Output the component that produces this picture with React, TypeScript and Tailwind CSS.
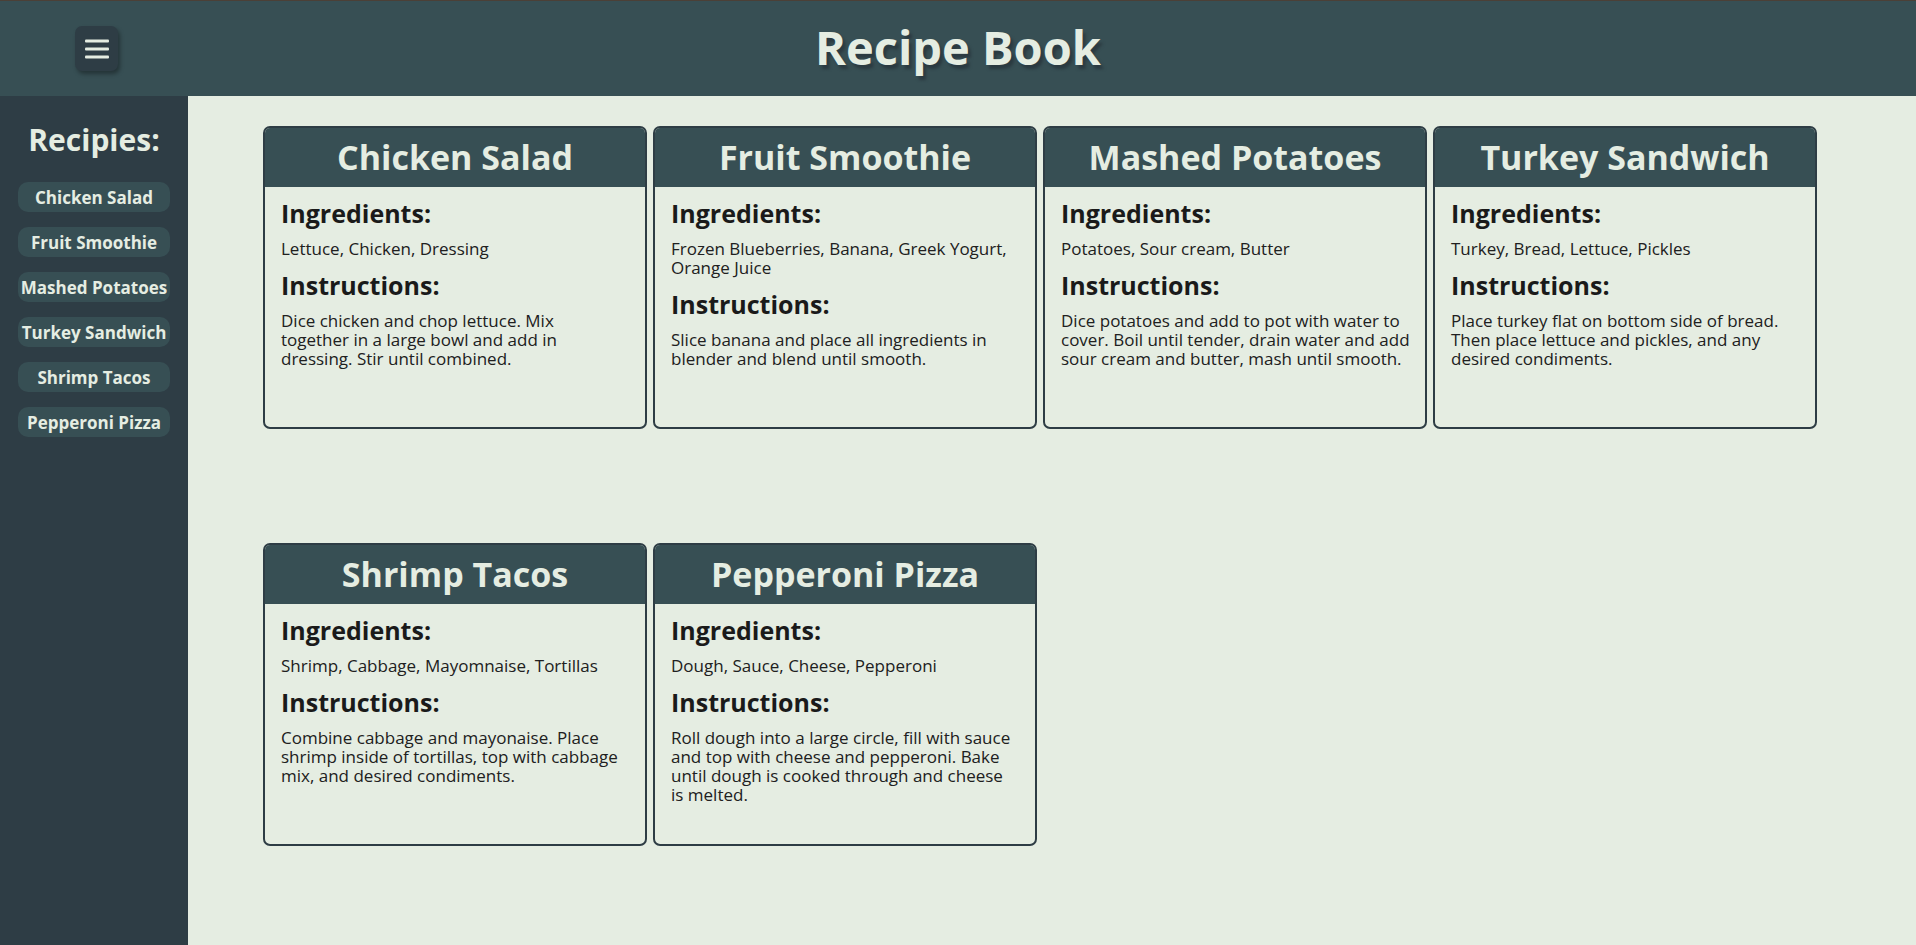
import React from "react"

// Recipe book page: top bar, sidebar of recipe links and a grid of recipe cards.
// Card text is kept as explicit lines so it breaks where the design breaks.

type Recipe = { name: string; ingredients: string[]; instructions: string[] }

const recipes: Recipe[] = [
    {
        name: "Chicken Salad",
        ingredients: ["Lettuce, Chicken, Dressing"],
        instructions: ["Dice chicken and chop lettuce. Mix", "together in a large bowl and add in", "dressing. Stir until combined."],
    },
    {
        name: "Fruit Smoothie",
        ingredients: ["Frozen Blueberries, Banana, Greek Yogurt,", "Orange Juice"],
        instructions: ["Slice banana and place all ingredients in", "blender and blend until smooth."],
    },
    {
        name: "Mashed Potatoes",
        ingredients: ["Potatoes, Sour cream, Butter"],
        instructions: [
            "Dice potatoes and add to pot with water to",
            "cover. Boil until tender, drain water and add",
            "sour cream and butter, mash until smooth.",
        ],
    },
    {
        name: "Turkey Sandwich",
        ingredients: ["Turkey, Bread, Lettuce, Pickles"],
        instructions: ["Place turkey flat on bottom side of bread.", "Then place lettuce and pickles, and any", "desired condiments."],
    },
    {
        name: "Shrimp Tacos",
        ingredients: ["Shrimp, Cabbage, Mayomnaise, Tortillas"],
        instructions: ["Combine cabbage and mayonaise. Place", "shrimp inside of tortillas, top with cabbage", "mix, and desired condiments."],
    },
    {
        name: "Pepperoni Pizza",
        ingredients: ["Dough, Sauce, Cheese, Pepperoni"],
        instructions: [
            "Roll dough into a large circle, fill with sauce",
            "and top with cheese and pepperoni. Bake",
            "until dough is cooked through and cheese",
            "is melted.",
        ],
    },
]

function MenuButton() {
    return (
        <button className="flex h-[45px] w-[43px] items-center justify-center rounded-[7px] bg-[#2e3d45] shadow-[2px_3px_4px_rgba(0,0,0,0.35)]">
            <svg width="24" height="20" viewBox="0 0 24 20" fill="#e5ede2">
                <rect x="0" y="0.5" width="24" height="3" rx="1" />
                <rect x="0" y="8.5" width="24" height="3" rx="1" />
                <rect x="0" y="16.5" width="24" height="3" rx="1" />
            </svg>
        </button>
    )
}

function Lines({ lines, className }: { lines: string[]; className?: string }) {
    return (
        <p className={className}>
            {lines.map((l, i) => (
                <span key={i} className="block whitespace-nowrap">
                    {l}
                </span>
            ))}
        </p>
    )
}

function RecipeCard({ recipe }: { recipe: Recipe }) {
    return (
        <div className="flex h-[303px] w-[384px] flex-col overflow-hidden rounded-[7px] border-2 border-[#2e3d45] bg-[#e5ede2]">
            <div className="flex h-[59px] shrink-0 items-center justify-center bg-[#374f54]">
                <h2 className="text-[34px] font-bold leading-[59px] text-[#e5ede2]">{recipe.name}</h2>
            </div>
            <div className="flex flex-col px-4 pt-[14px] text-[#1a1a1a]">
                <h3 className="text-[25px] font-bold leading-[24px]">Ingredients:</h3>
                <Lines lines={recipe.ingredients} className="mt-[14px] text-[17px] leading-[19px] text-[#202020]" />
                <h3 className="mt-[15px] text-[25px] font-bold leading-[24px]">Instructions:</h3>
                <Lines lines={recipe.instructions} className="mt-[14px] text-[17px] leading-[19px] text-[#202020]" />
            </div>
        </div>
    )
}

export default function App() {
    return (
        <div className="flex min-h-screen flex-col bg-[#e5ede2]" style={{ fontFamily: '"Open Sans", "Noto Sans", sans-serif' }}>
            <header className="grid h-[96px] shrink-0 grid-cols-[1fr_auto_1fr] items-center border-t border-[#4b4037] bg-[#374f54]">
                <div className="pl-[75px]">
                    <MenuButton />
                </div>
                <h1 className="pb-[3px] text-[47px] font-bold leading-none text-[#e5ede2] [text-shadow:3px_4px_3px_#2b3a41]">
                    Recipe Book
                </h1>
                <div />
            </header>

            <div className="flex flex-1">
                <aside className="flex w-[188px] shrink-0 flex-col items-center bg-[#2e3d45] pt-[24px]">
                    <h2 className="text-[30px] font-bold leading-[40px] text-[#e5ede2]">Recipies:</h2>
                    <nav className="mt-[22px] flex flex-col gap-[15px]">
                        {recipes.map((r) => (
                            <a
                                key={r.name}
                                href="#"
                                className="flex h-[30px] w-[152px] items-center justify-center rounded-[10px] bg-[#374f54] text-[17px] font-bold leading-none text-[#e5ede2]"
                            >
                                {r.name}
                            </a>
                        ))}
                    </nav>
                </aside>

                <main className="flex-1 pl-[75px] pt-[30px]">
                    <div className="grid grid-cols-[repeat(4,384px)] gap-x-[6px] gap-y-[114px]">
                        {recipes.map((r) => (
                            <RecipeCard key={r.name} recipe={r} />
                        ))}
                    </div>
                </main>
            </div>
        </div>
    )
}
